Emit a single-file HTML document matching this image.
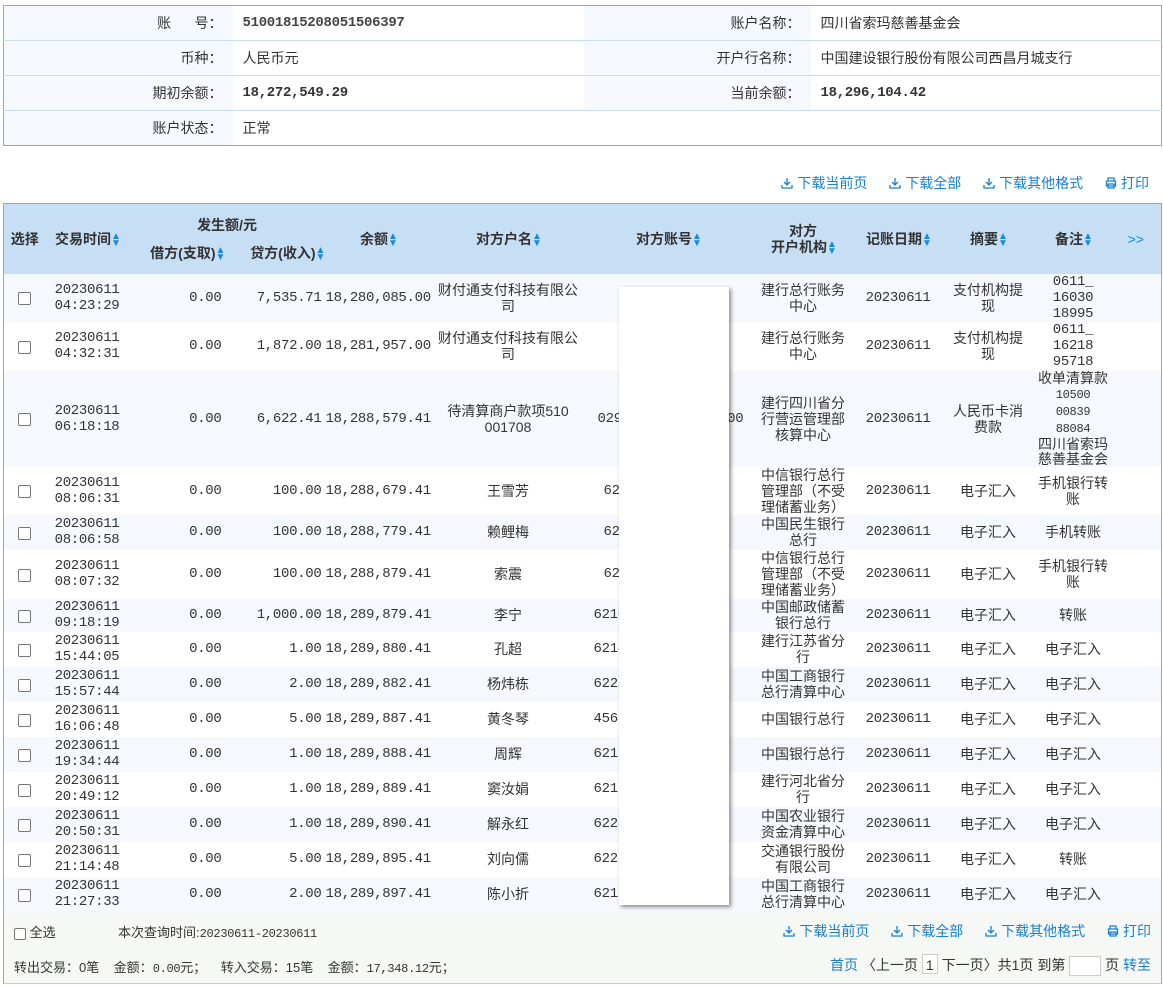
<!DOCTYPE html>
<html><head><meta charset="utf-8">
<style>
*{margin:0;padding:0;box-sizing:border-box}
body{width:1163px;height:987px;background:#fff;font-family:"Liberation Sans","Noto Sans CJK SC",sans-serif;font-size:14px;color:#333;position:relative;overflow:hidden}
.m{font-family:"Liberation Mono","Noto Sans CJK SC",monospace;font-size:12px;letter-spacing:-0.3px}
.info{position:absolute;left:3px;top:5px;width:1159px;border:1px solid #7aaee0;border-collapse:collapse}
.info td{height:35px;border-top:1px solid #c8dcef;vertical-align:middle;font-size:14px}
.info tr:first-child td{border-top:none}
.info .l{background:#f5f9fd;text-align:right;padding-right:10px}
.info .v{padding-left:10px}
.links{position:absolute;top:173px;right:14px;color:#1a7fd0;font-size:14px;white-space:nowrap}
.links span{margin-left:18px}
.ic{display:inline-block;width:12px;height:12px;vertical-align:-1px;margin-right:4px}
.grid{position:absolute;left:3px;top:203px;width:1159px;border:1px solid #7aaee0;border-collapse:collapse;table-layout:fixed}
.grid th{background:#c6dff5;font-weight:bold;font-size:14px;color:#333;white-space:nowrap}
.grid td{text-align:center;vertical-align:middle;line-height:16px;white-space:nowrap;font-size:14px;padding:0}
.grid tr.o td{background:#f5f9fd}
.s{color:#1a8ad8;font-size:10px;display:inline-block;line-height:7px;vertical-align:middle;width:8px}
.r{text-align:right!important;padding-right:4px!important}
.b{text-align:right!important;padding-right:8px!important}
.ac{text-align:left!important}
.cb{display:inline-block;width:13px;height:13px;border:1px solid #777;border-radius:2px;background:#fff;vertical-align:middle}
.mask{position:absolute;left:619px;top:287px;width:110px;height:618px;background:#fff;box-shadow:2px 2px 4px rgba(0,0,0,.45)}
.foot{position:absolute;left:3px;top:911px;width:1159px;height:73px;background:#f6f8f5;border:1px solid #7aaee0;border-top:none;border-bottom:1px solid #ccc;font-size:13px}
.foot .a{color:#1a7fd0}
</style></head><body>
<table class="info">
<tr><td class="l" style="width:229px">账&nbsp;&nbsp;&nbsp;&nbsp;&nbsp;&nbsp;号：</td><td class="v m" style="width:351px;font-weight:bold;color:#444">51001815208051506397</td><td class="l" style="width:227px">账户名称：</td><td class="v">四川省索玛慈善基金会</td></tr>
<tr><td class="l">币种：</td><td class="v">人民币元</td><td class="l">开户行名称：</td><td class="v">中国建设银行股份有限公司西昌月城支行</td></tr>
<tr><td class="l">期初余额：</td><td class="v m" style="font-weight:bold">18,272,549.29</td><td class="l">当前余额：</td><td class="v m" style="font-weight:bold">18,296,104.42</td></tr>
<tr><td class="l">账户状态：</td><td class="v">正常</td><td></td><td></td></tr>
</table>
<div class="links">
<span><svg class="ic" viewBox="0 0 12 12"><path d="M6 1v7M3 5l3 3 3-3M1 8v3h10V8" fill="none" stroke="#1a7fd0" stroke-width="1.3"/></svg>下载当前页</span>
<span><svg class="ic" viewBox="0 0 12 12"><path d="M6 1v7M3 5l3 3 3-3M1 8v3h10V8" fill="none" stroke="#1a7fd0" stroke-width="1.3"/></svg>下载全部</span>
<span><svg class="ic" viewBox="0 0 12 12"><path d="M6 1v7M3 5l3 3 3-3M1 8v3h10V8" fill="none" stroke="#1a7fd0" stroke-width="1.3"/></svg>下载其他格式</span>
<span><svg class="ic" viewBox="0 0 12 12"><path d="M3 4V1h6v3M1.5 4h9v5h-9zM3 7h6v4H3z" fill="none" stroke="#1a7fd0" stroke-width="1.3"/></svg>打印</span>
</div>
<table class="grid">
<colgroup><col style="width:42px"><col style="width:83px"><col style="width:97px"><col style="width:100px"><col style="width:105px"><col style="width:155px"><col style="width:165px"><col style="width:105px"><col style="width:85px"><col style="width:95px"><col style="width:75px"><col></colgroup>
<tr style="height:35px"><th rowspan="2">选择</th><th rowspan="2">交易时间<span class="s">▲<br>▼</span></th><th colspan="2" style="vertical-align:bottom;padding-bottom:4px">发生额/元</th><th rowspan="2">余额<span class="s">▲<br>▼</span></th><th rowspan="2">对方户名<span class="s">▲<br>▼</span></th><th rowspan="2">对方账号<span class="s">▲<br>▼</span></th><th rowspan="2" style="line-height:16px">对方<br>开户机构<span class="s">▲<br>▼</span></th><th rowspan="2">记账日期<span class="s">▲<br>▼</span></th><th rowspan="2">摘要<span class="s">▲<br>▼</span></th><th rowspan="2">备注<span class="s">▲<br>▼</span></th><th rowspan="2" style="color:#1a8ad8;font-weight:normal">&gt;&gt;</th></tr>
<tr style="height:35px"><th style="text-align:right;padding-right:2px;vertical-align:top;padding-top:4px">借方(支取)<span class="s">▲<br>▼</span></th><th style="text-align:right;padding-right:2px;vertical-align:top;padding-top:4px">贷方(收入)<span class="s">▲<br>▼</span></th></tr>

<tr class="o" style="height:48px"><td><span class="cb"></span></td><td class="m">20230611<br>04:23:29</td><td class="m r">0.00</td><td class="m r">7,535.71</td><td class="m b">18,280,085.00</td><td>财付通支付科技有限公<br>司</td><td class="m"></td><td>建行总行账务<br>中心</td><td class="m">20230611</td><td>支付机构提<br>现</td><td class="m">0611_<br>16030<br>18995</td><td></td></tr>
<tr style="height:49px"><td><span class="cb"></span></td><td class="m">20230611<br>04:32:31</td><td class="m r">0.00</td><td class="m r">1,872.00</td><td class="m b">18,281,957.00</td><td>财付通支付科技有限公<br>司</td><td class="m"></td><td>建行总行账务<br>中心</td><td class="m">20230611</td><td>支付机构提<br>现</td><td class="m">0611_<br>16218<br>95718</td><td></td></tr>
<tr class="o" style="height:96px"><td><span class="cb"></span></td><td class="m">20230611<br>06:18:18</td><td class="m r">0.00</td><td class="m r">6,622.41</td><td class="m b">18,288,579.41</td><td>待清算商户款项510<br>001708</td><td class="m ac" style="padding-left:12px">029000000000000000</td><td>建行四川省分<br>行营运管理部<br>核算中心</td><td class="m">20230611</td><td>人民币卡消<br>费款</td><td style="line-height:15px">收单清算款<br><span class="m">10500<br>00839<br>88084</span><br>四川省索玛<br>慈善基金会</td><td></td></tr>
<tr style="height:48px"><td><span class="cb"></span></td><td class="m">20230611<br>08:06:31</td><td class="m r">0.00</td><td class="m r">100.00</td><td class="m b">18,288,679.41</td><td>王雪芳</td><td class="m ac" style="padding-left:18px">6200000000000</td><td>中信银行总行<br>管理部（不受<br>理储蓄业务）</td><td class="m">20230611</td><td>电子汇入</td><td>手机银行转<br>账</td><td></td></tr>
<tr class="o" style="height:35px"><td><span class="cb"></span></td><td class="m">20230611<br>08:06:58</td><td class="m r">0.00</td><td class="m r">100.00</td><td class="m b">18,288,779.41</td><td>赖鲤梅</td><td class="m ac" style="padding-left:18px">6200000000000</td><td>中国民生银行<br>总行</td><td class="m">20230611</td><td>电子汇入</td><td>手机转账</td><td></td></tr>
<tr style="height:49px"><td><span class="cb"></span></td><td class="m">20230611<br>08:07:32</td><td class="m r">0.00</td><td class="m r">100.00</td><td class="m b">18,288,879.41</td><td>索震</td><td class="m ac" style="padding-left:18px">6200000000000</td><td>中信银行总行<br>管理部（不受<br>理储蓄业务）</td><td class="m">20230611</td><td>电子汇入</td><td>手机银行转<br>账</td><td></td></tr>
<tr class="o" style="height:33px"><td><span class="cb"></span></td><td class="m">20230611<br>09:18:19</td><td class="m r">0.00</td><td class="m r">1,000.00</td><td class="m b">18,289,879.41</td><td>李宁</td><td class="m ac" style="padding-left:8px">6210000000000000</td><td>中国邮政储蓄<br>银行总行</td><td class="m">20230611</td><td>电子汇入</td><td>转账</td><td></td></tr>
<tr style="height:35px"><td><span class="cb"></span></td><td class="m">20230611<br>15:44:05</td><td class="m r">0.00</td><td class="m r">1.00</td><td class="m b">18,289,880.41</td><td>孔超</td><td class="m ac" style="padding-left:8px">6214000000000000</td><td>建行江苏省分<br>行</td><td class="m">20230611</td><td>电子汇入</td><td>电子汇入</td><td></td></tr>
<tr class="o" style="height:35px"><td><span class="cb"></span></td><td class="m">20230611<br>15:57:44</td><td class="m r">0.00</td><td class="m r">2.00</td><td class="m b">18,289,882.41</td><td>杨炜栋</td><td class="m ac" style="padding-left:8px">6222000000000000</td><td>中国工商银行<br>总行清算中心</td><td class="m">20230611</td><td>电子汇入</td><td>电子汇入</td><td></td></tr>
<tr style="height:35px"><td><span class="cb"></span></td><td class="m">20230611<br>16:06:48</td><td class="m r">0.00</td><td class="m r">5.00</td><td class="m b">18,289,887.41</td><td>黄冬琴</td><td class="m ac" style="padding-left:8px">4563000000000000</td><td>中国银行总行</td><td class="m">20230611</td><td>电子汇入</td><td>电子汇入</td><td></td></tr>
<tr class="o" style="height:35px"><td><span class="cb"></span></td><td class="m">20230611<br>19:34:44</td><td class="m r">0.00</td><td class="m r">1.00</td><td class="m b">18,289,888.41</td><td>周辉</td><td class="m ac" style="padding-left:8px">6217000000000000</td><td>中国银行总行</td><td class="m">20230611</td><td>电子汇入</td><td>电子汇入</td><td></td></tr>
<tr style="height:35px"><td><span class="cb"></span></td><td class="m">20230611<br>20:49:12</td><td class="m r">0.00</td><td class="m r">1.00</td><td class="m b">18,289,889.41</td><td>窦汝娟</td><td class="m ac" style="padding-left:8px">6217000000000000</td><td>建行河北省分<br>行</td><td class="m">20230611</td><td>电子汇入</td><td>电子汇入</td><td></td></tr>
<tr class="o" style="height:35px"><td><span class="cb"></span></td><td class="m">20230611<br>20:50:31</td><td class="m r">0.00</td><td class="m r">1.00</td><td class="m b">18,289,890.41</td><td>解永红</td><td class="m ac" style="padding-left:8px">6228000000000000</td><td>中国农业银行<br>资金清算中心</td><td class="m">20230611</td><td>电子汇入</td><td>电子汇入</td><td></td></tr>
<tr style="height:35px"><td><span class="cb"></span></td><td class="m">20230611<br>21:14:48</td><td class="m r">0.00</td><td class="m r">5.00</td><td class="m b">18,289,895.41</td><td>刘向儒</td><td class="m ac" style="padding-left:8px">6222000000000000</td><td>交通银行股份<br>有限公司</td><td class="m">20230611</td><td>电子汇入</td><td>转账</td><td></td></tr>
<tr class="o" style="height:35px"><td><span class="cb"></span></td><td class="m">20230611<br>21:27:33</td><td class="m r">0.00</td><td class="m r">2.00</td><td class="m b">18,289,897.41</td><td>陈小折</td><td class="m ac" style="padding-left:8px">6212000000000000</td><td>中国工商银行<br>总行清算中心</td><td class="m">20230611</td><td>电子汇入</td><td>电子汇入</td><td></td></tr>
</table>
<div class="mask"></div>
<div class="foot">
<div style="position:absolute;left:10px;top:11px"><span class="cb" style="width:12px;height:12px"></span> 全选</div>
<div style="position:absolute;left:114px;top:11px">本次查询时间:<span class="m">20230611-20230611</span></div>
<div class="a" style="position:absolute;right:10px;top:10px;white-space:nowrap;font-size:14px">
<span><svg class="ic" viewBox="0 0 12 12"><path d="M6 1v7M3 5l3 3 3-3M1 8v3h10V8" fill="none" stroke="#1a7fd0" stroke-width="1.3"/></svg>下载当前页</span>
<span style="margin-left:18px"><svg class="ic" viewBox="0 0 12 12"><path d="M6 1v7M3 5l3 3 3-3M1 8v3h10V8" fill="none" stroke="#1a7fd0" stroke-width="1.3"/></svg>下载全部</span>
<span style="margin-left:18px"><svg class="ic" viewBox="0 0 12 12"><path d="M6 1v7M3 5l3 3 3-3M1 8v3h10V8" fill="none" stroke="#1a7fd0" stroke-width="1.3"/></svg>下载其他格式</span>
<span style="margin-left:18px"><svg class="ic" viewBox="0 0 12 12"><path d="M3 4V1h6v3M1.5 4h9v5h-9zM3 7h6v4H3z" fill="none" stroke="#1a7fd0" stroke-width="1.3"/></svg>打印</span>
</div>
<div style="position:absolute;left:10px;top:46px;white-space:nowrap">转出交易：0笔&nbsp;&nbsp;&nbsp;&nbsp;金额：<span class="m">0.00</span>元；&nbsp;&nbsp;&nbsp;&nbsp;转入交易：15笔&nbsp;&nbsp;&nbsp;&nbsp;金额：<span class="m">17,348.12</span>元；</div>
<div style="position:absolute;right:10px;top:43px;white-space:nowrap;line-height:20px;font-size:14px"><span class="a">首页</span> 〈上一页 <span style="display:inline-block;border:1px solid #ccc;background:#fff;width:16px;text-align:center;height:20px">1</span> 下一页〉共1页 到第 <span style="display:inline-block;border:1px solid #ccc;background:#fff;width:32px;height:20px;vertical-align:middle"></span> 页 <span class="a">转至</span></div>
</div>
</body></html>
